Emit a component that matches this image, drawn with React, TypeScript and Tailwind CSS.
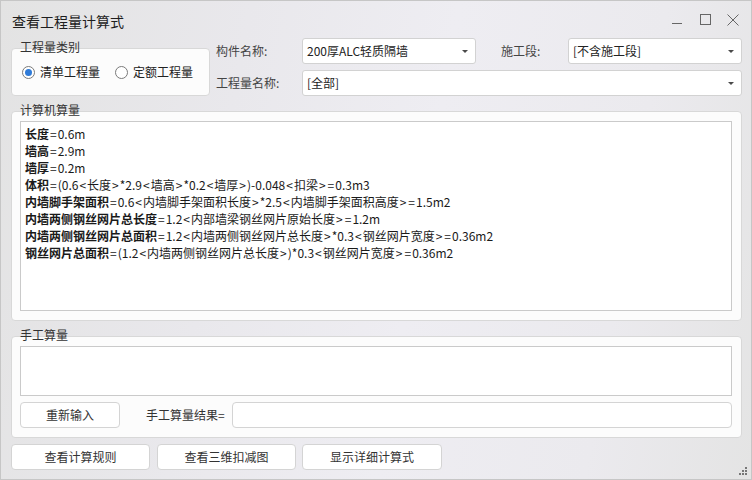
import type { ReactNode } from 'react';

const FONT = "font-['Noto_Sans_CJK_SC','Noto_Sans',sans-serif]";

function Caret() {
  return (
    <svg width="6" height="3" viewBox="0 0 6 3" className="shrink-0">
      <path d="M0 0H6L3 3Z" fill="#4a4a4a" />
    </svg>
  );
}

function Select({ value, className = '' }: { value: string; className?: string }) {
  return (
    <div className={`h-[26px] flex items-center justify-between pl-[4px] pr-[7px] bg-white border border-[#d2d2d2] rounded-[3px] text-[12px] text-[#222] leading-none ${className}`}>
      <span>{value}</span>
      <Caret />
    </div>
  );
}

function Radio({ checked, label }: { checked?: boolean; label: string }) {
  return (
    <div className="flex items-center">
      <span className="w-[13px] h-[13px] rounded-full border border-[#7a7a7a] bg-white flex items-center justify-center">
        {checked && <span className="w-[7px] h-[7px] rounded-full bg-[#2f7bd8]" />}
      </span>
      <span className="ml-[5px] text-[12px] text-[#222] leading-none">{label}</span>
    </div>
  );
}

function Group({ title, className = '', children }: { title: string; className?: string; children?: ReactNode }) {
  return (
    <div className={`relative bg-[#fcfcfc] border border-[#d8d8d8] rounded-[4px] ${className}`}>
      {/* caption sits over the top border */}
      <span className="absolute left-[8px] top-[-10px] text-[12px] leading-[16px] text-[#333]">{title}</span>
      {children}
    </div>
  );
}

function Button({ label, className = '' }: { label: string; className?: string }) {
  return (
    <div className={`h-[26px] flex items-center justify-center bg-white border border-[#d4d4d4] rounded-[4px] text-[12px] text-[#333] leading-none ${className}`}>
      {label}
    </div>
  );
}

function Formula({ text }: { text: string }) {
  const parts = text.split(/([<>=])/);
  return (
    <>
      {parts.map((p, i) =>
        p === '<' || p === '>' || p === '=' ? (
          <span key={i} className="px-[1px]">{p}</span>
        ) : (
          <span key={i}>{p}</span>
        )
      )}
    </>
  );
}

const lines: [string, string][] = [
  ['长度', '=0.6m'],
  ['墙高', '=2.9m'],
  ['墙厚', '=0.2m'],
  ['体积', '=(0.6<长度>*2.9<墙高>*0.2<墙厚>)-0.048<扣梁>=0.3m3'],
  ['内墙脚手架面积', '=0.6<内墙脚手架面积长度>*2.5<内墙脚手架面积高度>=1.5m2'],
  ['内墙两侧钢丝网片总长度', '=1.2<内部墙梁钢丝网片原始长度>=1.2m'],
  ['内墙两侧钢丝网片总面积', '=1.2<内墙两侧钢丝网片总长度>*0.3<钢丝网片宽度>=0.36m2'],
  ['钢丝网片总面积', '=(1.2<内墙两侧钢丝网片总长度>)*0.3<钢丝网片宽度>=0.36m2'],
];

export default function App() {
  return (
    <div className={`${FONT} relative w-[752px] h-[480px] flex flex-col border border-[#c6c6c6] bg-[linear-gradient(100deg,#e3e3e3_0%,#e9e8ec_30%,#eeedf2_55%,#ebeaee_80%,#e4e4e4_100%)] overflow-hidden`}>
      {/* Title bar */}
      <div className="h-[37px] flex items-center pl-[11px] pr-[4px] shrink-0">
        <span className="text-[14px] text-[#1e1e1e] leading-none pt-[2px]">查看工程量计算式</span>
        <div className="ml-auto flex items-center">
          <span className="w-[28px] h-[28px] flex items-center justify-center">
            <svg width="10" height="10" viewBox="0 0 10 10"><path d="M0 8.5H10" stroke="#666" strokeWidth="1" /></svg>
          </span>
          <span className="w-[28px] h-[28px] flex items-center justify-center">
            <svg width="11" height="11" viewBox="0 0 11 11"><rect x="0.5" y="0.5" width="10" height="10" fill="none" stroke="#666" strokeWidth="1" /></svg>
          </span>
          <span className="w-[28px] h-[28px] flex items-center justify-center">
            <svg width="12" height="12" viewBox="0 0 12 12"><path d="M0.5 0.5L11.5 11.5M11.5 0.5L0.5 11.5" stroke="#666" strokeWidth="1" /></svg>
          </span>
        </div>
      </div>

      {/* Filters */}
      <div className="flex pl-[10px] pr-[9px] gap-[6px] shrink-0">
        <Group title="工程量类别" className="mt-[10px] w-[199px] h-[48px] flex items-center pl-[10px]">
          <Radio checked label="清单工程量" />
          <span className="w-[15px]" />
          <Radio label="定额工程量" />
        </Group>
        <div className="flex-1 flex flex-col gap-[6px]">
          <div className="flex items-center">
            <span className="w-[86px] text-[12px] text-[#444] leading-none">构件名称:</span>
            <Select value="200厚ALC轻质隔墙" className="w-[174px]" />
            <span className="w-[92px] pl-[25px] text-[12px] text-[#444] leading-none">施工段:</span>
            <Select value="[不含施工段]" className="flex-1" />
          </div>
          <div className="flex items-center">
            <span className="w-[86px] text-[12px] text-[#444] leading-none">工程量名称:</span>
            <Select value="[全部]" className="flex-1" />
          </div>
        </div>
      </div>

      {/* Computed quantities */}
      <Group title="计算机算量" className="mt-[15px] ml-[10px] mr-[9px] h-[210px] flex pt-[9px] pb-[9px] pl-[8px] pr-[9px] shrink-0">
        <div className="flex-1 bg-white border border-[#cacaca] pt-[3px] pl-[4px] text-[12px] leading-[17px] text-[#1a1a1a]">
          {lines.map(([k, v]) => (
            <div key={k}>
              <span className="font-bold">{k}</span>
              <Formula text={v} />
            </div>
          ))}
        </div>
      </Group>

      {/* Manual quantities */}
      <Group title="手工算量" className="mt-[15px] ml-[10px] mr-[9px] h-[102px] flex flex-col pt-[9px] pb-[9px] pl-[8px] pr-[9px] shrink-0">
        <div className="h-[50px] bg-white border border-[#cacaca]" />
        <div className="mt-[6px] flex items-center">
          <Button label="重新输入" className="w-[100px]" />
          <span className="w-[112px] pl-[26px] text-[12px] text-[#333] leading-none">手工算量结果=</span>
          <div className="flex-1 h-[26px] bg-white border border-[#d4d4d4] rounded-[4px]" />
        </div>
      </Group>

      {/* Bottom actions */}
      <div className="mt-[6px] flex pl-[10px]">
        <Button label="查看计算规则" className="w-[139px]" />
        <Button label="查看三维扣减图" className="w-[139px] ml-[7px]" />
        <Button label="显示详细计算式" className="w-[140px] ml-[6px]" />
      </div>

      {/* resize grip */}
      <svg width="9" height="9" viewBox="0 0 9 9" className="absolute right-[3px] bottom-[3px]">
        <rect x="6" y="0" width="2" height="2" fill="#777" />
        <rect x="3" y="3" width="2" height="2" fill="#777" />
        <rect x="6" y="3" width="2" height="2" fill="#777" />
        <rect x="0" y="6" width="2" height="2" fill="#777" />
        <rect x="3" y="6" width="2" height="2" fill="#777" />
        <rect x="6" y="6" width="2" height="2" fill="#777" />
      </svg>
    </div>
  );
}
